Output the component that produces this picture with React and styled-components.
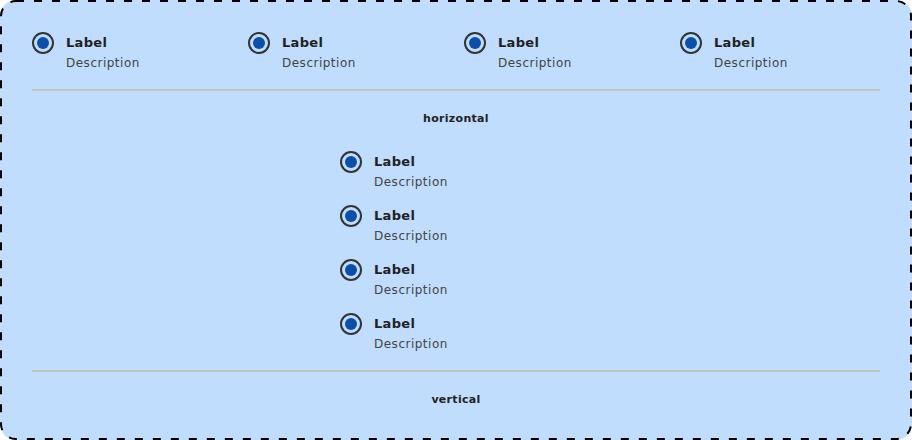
import React from "react";
import styled, { createGlobalStyle } from "styled-components";

const Global = createGlobalStyle`
  html, body { margin: 0; padding: 0; background: #ffffff; }
  body { font-family: "DejaVu Sans", "Noto Sans", sans-serif; }
  * { box-sizing: border-box; }
`;

const Frame = styled.div`
  position: relative;
  width: 912px;
  height: 440px;
  background: #c0ddfd;
  border-radius: 16px;
  padding: 32px 32px 0;
  display: flex;
  flex-direction: column;
`;

const DashedEdge = styled.svg`
  position: absolute;
  inset: 0;
  width: 912px;
  height: 440px;
  pointer-events: none;
`;

const Row = styled.div`
  display: flex;
  gap: 16px;
`;

const Column = styled.div`
  display: flex;
  flex-direction: column;
  gap: 13px;
  padding-left: ${(p) => p.$indent}px;
  margin-top: ${(p) => p.$top}px;
`;

const Item = styled.label`
  display: flex;
  gap: 12px;
  width: 200px;
  align-items: flex-start;
`;

const Radio = styled.span`
  width: 22px;
  height: 22px;
  border-radius: 50%;
  border: 2px solid #333;
  display: flex;
  align-items: center;
  justify-content: center;
  flex: none;
  &::after {
    content: "";
    width: 12px;
    height: 12px;
    border-radius: 50%;
    background: #0a4fa8;
  }
`;

const Texts = styled.div`
  display: flex;
  flex-direction: column;
  padding-top: 1px;
`;

const Label = styled.span`
  font-size: 13px;
  font-weight: 700;
  color: #222;
  line-height: 20px;
  letter-spacing: 0.3px;
`;

const Desc = styled.span`
  font-size: 12px;
  color: #444;
  line-height: 20px;
  letter-spacing: 0.5px;
`;

const Divider = styled.hr`
  border: none;
  height: 2px;
  background: #c2c2c4;
  margin: ${(p) => p.$top}px 0 0;
  width: 100%;
`;

const Caption = styled.div`
  text-align: center;
  font-size: 11px;
  font-weight: 700;
  color: #222;
  line-height: 16px;
  letter-spacing: 0.3px;
  margin-top: ${(p) => p.$top}px;
`;

function Option() {
  return (
    <Item>
      <Radio />
      <Texts>
        <Label>Label</Label>
        <Desc>Description</Desc>
      </Texts>
    </Item>
  );
}

export default function App() {
  return (
    <>
      <Global />
      <Frame>
        <DashedEdge viewBox="0 0 912 440">
          <rect
            x="1"
            y="1"
            width="910"
            height="438"
            rx="15"
            fill="none"
            stroke="#000"
            strokeWidth="2"
            strokeDasharray="8 10"
          />
        </DashedEdge>
        <Row>
          <Option />
          <Option />
          <Option />
          <Option />
        </Row>
        <Divider $top={16} />
        <Caption $top={20}>horizontal</Caption>
        <Column $indent={308} $top={24}>
          <Option />
          <Option />
          <Option />
          <Option />
        </Column>
        <Divider $top={16} />
        <Caption $top={20}>vertical</Caption>
      </Frame>
    </>
  );
}
